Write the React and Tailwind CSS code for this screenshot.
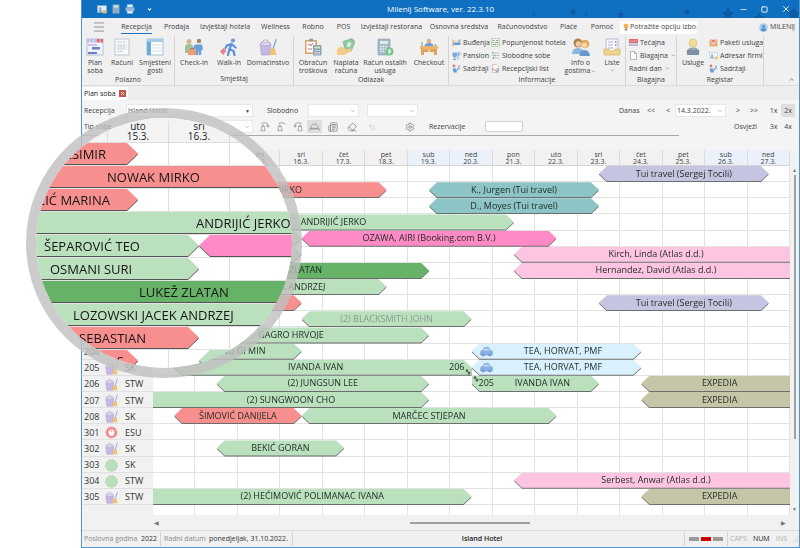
import React from 'react';
import clsx from 'clsx';
import { ChevronDown, ChevronUp, Eraser, Menu, Minus, Newspaper, Settings, Square, Undo2, X } from 'lucide-react';

const MENU = [
  { label: 'Recepcija', width: 'w-[43px]', active: true },
  { label: 'Prodaja', width: 'w-[37px]' },
  { label: 'Izvještaji hotela', width: 'w-[60px]' },
  { label: 'Wellness', width: 'w-[41px]' },
  { label: 'Robno', width: 'w-[34px]' },
  { label: 'POS', width: 'w-[27px]' },
  { label: 'Izvještaji restorana', width: 'w-[69px]' },
  { label: 'Osnovna sredstva', width: 'w-[66px]' },
  { label: 'Računovodstvo', width: 'w-[61px]' },
  { label: 'Plaće', width: 'w-[31px]' },
  { label: 'Pomoć', width: 'w-[36px]' },
];

const DAYS = [
  ['ned', '13.3.'], ['pon', '14.3.'], ['uto', '15.3.'], ['sri', '16.3.'], ['čet', '17.3.'],
  ['pet', '18.3.'], ['sub', '19.3.'], ['ned', '20.3.'], ['pon', '21.3.'], ['uto', '22.3.'],
  ['sri', '23.3.'], ['čet', '24.3.'], ['pet', '25.3.'], ['sub', '26.3.'], ['ned', '27.3.'],
];

const COLORS = {
  red: 'bg-[#f78f8f]',
  green: 'bg-[#bae0be]',
  dark: 'bg-[#66b266]',
  teal: 'bg-[#8dc5c7]',
  pink: 'bg-[#ff8ac6]',
  rose: 'bg-[#fdc5e2]',
  lilac: 'bg-[#c6c5e1]',
  sky: 'bg-[#d9f1ff]',
  olive: 'bg-[#c5c5a7]',
};

const SHAPES = {
  both: '[clip-path:polygon(0_50%,8px_0,calc(100%-8px)_0,100%_50%,calc(100%-8px)_100%,8px_100%)]',
  left: '[clip-path:polygon(0_50%,8px_0,100%_0,100%_100%,8px_100%)]',
  right: '[clip-path:polygon(0_0,calc(100%-8px)_0,100%_50%,calc(100%-8px)_100%,0_100%)]',
  lens: '[clip-path:polygon(0_0,calc(100%-11px)_0,100%_50%,calc(100%-11px)_100%,0_100%)]',
  lensLeft: '[clip-path:polygon(0_50%,11px_0,100%_0,100%_100%,11px_100%)]',
  // a stay that continues in another room has a squared corner on the side of the move
  movedIn: '[clip-path:polygon(0_0,calc(100%-8px)_0,100%_50%,calc(100%-8px)_100%,8px_100%,0_50%)]',
  movedOut: '[clip-path:polygon(0_50%,8px_0,calc(100%-8px)_0,100%_50%,100%_100%,8px_100%)]',
  none: '',
};

const BAR_PADDING = {
  both: 'px-2',
  left: 'pr-2 pl-4',
  right: 'px-2',
  movedIn: 'pr-2 pl-px',
  movedOut: 'pr-px pl-2',
};

// from / to are half-day steps, 0 is the morning of the first day
const ROOMS = [
  { bars: [{ from: 21, to: 29, color: 'lilac', shape: 'both', text: 'Tui travel (Sergej Tocili)' }] },
  {
    bars: [
      { from: 0, to: 11, color: 'red', shape: 'right', text: 'NOWAK MIRKO' },
      { from: 13, to: 21, color: 'teal', shape: 'both', text: 'K., Jurgen (Tui travel)' },
    ],
  },
  { bars: [{ from: 13, to: 21, color: 'teal', shape: 'both', text: 'D., Moyes (Tui travel)' }] },
  { bars: [{ from: 0, to: 17, color: 'green', shape: 'right', text: 'ANDRIJIĆ JERKO' }] },
  {
    bars: [
      { from: 0, to: 7, color: 'green', shape: 'right' },
      { from: 7, to: 19, color: 'pink', shape: 'both', text: 'OZAWA, AIRI (Booking.com B.V.)' },
    ],
  },
  {
    bars: [
      { from: 0, to: 7, color: 'green', shape: 'right' },
      { from: 17, to: 30, color: 'rose', shape: 'left', text: 'Kirch, Linda (Atlas d.d.)' },
    ],
  },
  {
    bars: [
      { from: 0, to: 13, color: 'dark', shape: 'right', text: 'LUKEŽ ZLATAN' },
      { from: 17, to: 30, color: 'rose', shape: 'left', text: 'Hernandez, David (Atlas d.d.)' },
    ],
  },
  { bars: [{ from: 0, to: 11, color: 'green', shape: 'right', text: 'LOZOWSKI JACEK ANDRZEJ' }] },
  {
    bars: [
      { from: 0, to: 7, color: 'red', shape: 'right' },
      { from: 21, to: 29, color: 'lilac', shape: 'both', text: 'Tui travel (Sergej Tocili)' },
    ],
  },
  { bars: [{ from: 7, to: 15, color: 'green', shape: 'both', text: '(2) BLACKSMITH JOHN', muted: true }] },
  { bars: [{ from: 0, to: 13, color: 'green', shape: 'right', text: 'GAGRO HRVOJE' }] },
  {
    number: '204',
    bars: [
      { from: 1, to: 7, color: 'green', shape: 'both', text: 'YANG GI MIN' },
      { from: 15, to: 23, color: 'sky', shape: 'both', text: 'TEA, HORVAT, PMF', car: true },
    ],
  },
  {
    number: '205', state: 'dirty', type: 'SK',
    bars: [
      { from: 1, to: 15, color: 'green', shape: 'movedOut', text: 'IVANDA IVAN', after: '206' },
      { from: 15, to: 23, color: 'sky', shape: 'both', text: 'TEA, HORVAT, PMF', car: true },
    ],
  },
  {
    number: '206', state: 'dirty', type: 'STW',
    bars: [
      { from: 3, to: 13, color: 'green', shape: 'both', text: '(2) JUNGSUN LEE' },
      { from: 15, to: 21, color: 'green', shape: 'movedIn', text: 'IVANDA IVAN', before: '205' },
      { from: 23, to: 30, color: 'olive', shape: 'left', text: 'EXPEDIA' },
    ],
  },
  {
    number: '207', state: 'dirty', type: 'STW',
    bars: [
      { from: 0, to: 13, color: 'green', shape: 'right', text: '(2) SUNGWOON CHO' },
      { from: 23, to: 30, color: 'olive', shape: 'left', text: 'EXPEDIA' },
    ],
  },
  {
    number: '208', state: 'dirty', type: 'SK',
    bars: [
      { from: 1, to: 7, color: 'red', shape: 'both', text: 'ŠIMOVIĆ DANIJELA' },
      { from: 7, to: 19, color: 'green', shape: 'both', text: 'MARČEC STJEPAN' },
    ],
  },
  { number: '301', state: 'blocked', type: 'ESU', bars: [] },
  {
    number: '302', state: 'dirty', type: 'SK',
    bars: [{ from: 3, to: 9, color: 'green', shape: 'both', text: 'BEKIĆ GORAN' }],
  },
  { number: '303', state: 'clean', type: 'SK', bars: [] },
  {
    number: '304', state: 'clean', type: 'STW',
    bars: [{ from: 17, to: 30, color: 'rose', shape: 'left', text: 'Serbest, Anwar (Atlas d.d.)' }],
  },
  {
    number: '305', state: 'dirty', type: 'STW',
    bars: [
      { from: 0, to: 15, color: 'green', shape: 'right', text: '(2) HEĆIMOVIĆ POLIMANAC IVANA' },
      { from: 23, to: 30, color: 'olive', shape: 'left', text: 'EXPEDIA' },
    ],
  },
];

const LENS_ROWS = [
  { text: 'KREŠIMIR', color: 'red', width: 'w-[102px]', pad: 'justify-end pr-8', shape: 'lens' },
  { text: 'NOWAK MIRKO', color: 'red', width: 'w-full', pad: 'pl-[71px]', shape: 'none' },
  { text: 'ČIĆ MARINA', color: 'red', width: 'w-[102px]', pad: 'justify-end pr-7', shape: 'lens' },
  { text: 'ANDRIJIĆ JERKO', color: 'green', width: 'w-full', pad: 'pl-40', shape: 'none' },
  { text: 'ŠEPAROVIĆ TEO', color: 'green', width: 'w-[163px]', pad: 'pl-2', shape: 'lens', next: 'pink' },
  { text: 'OSMANI SURI', color: 'green', width: 'w-[163px]', pad: 'pl-[14px]', shape: 'lens' },
  { text: 'LUKEŽ ZLATAN', color: 'dark', width: 'w-full', pad: 'pl-[103px]', shape: 'none' },
  { text: 'LOZOWSKI JACEK ANDRZEJ', color: 'green', width: 'w-full', pad: 'pl-[37px]', shape: 'none' },
  { text: 'K SEBASTIAN', color: 'red', width: 'w-[163px]', pad: 'justify-end pr-[53px]', shape: 'lens' },
  { text: 'KA S', color: 'red', width: 'w-[102px]', pad: 'justify-end pr-[14px]', shape: 'lens', gap: true, next: 'green' },
];

/* ---------- icons ---------- */

const Svg = ({ children, className = 'size-[18px]' }) => (
  <svg viewBox="0 0 18 18" className={clsx('shrink-0 opacity-90', className)} fill="none" aria-hidden="true">
    {children}
  </svg>
);

const PlanIcon = (p) => (
  <Svg {...p}>
    <rect x="1" y="1" width="16" height="16" fill="#f3f4fb" stroke="#9aa3c7" strokeWidth=".7" />
    <path d="M1 1h10v3.500H1z" fill="#aebbe0" />
    <path d="M11 1h6v3.500h-6z" fill="#e05a63" />
    <path d="M4 1v3.500M7.500 1v3.500M14 1v3.500" stroke="#fff" strokeWidth=".6" />
    <path d="M6 9h8v2.500H6zM2 14h9v2H2z" fill="#5a74b8" />
    <path d="M2 6h9v2H2z" fill="#c9bbe6" />
  </Svg>
);

const InvoiceIcon = (p) => (
  <Svg {...p}>
    <rect x="2" y="1" width="14" height="16" fill="#fafbfc" stroke="#aab3bb" strokeWidth=".8" />
    <path d="M4.500 4h9M4.500 7h9M4.500 9h9M4.500 11h9M4.500 13.500h5" stroke="#9fb0c0" strokeWidth=".9" strokeDasharray="2 .8" />
  </Svg>
);

const ListIcon = (p) => (
  <Svg {...p}>
    <rect x="1" y="1" width="16" height="16" fill="#fff" stroke="#8fabc2" strokeWidth=".8" />
    <path d="M1 1h16v3H1z" fill="#9cc9ea" />
    <path d="M1 4h4v13H1z" fill="#5ea5dc" />
    <path d="M6 7h10M6 10h10M6 13h10" stroke="#c8d6e0" strokeWidth=".8" />
  </Svg>
);

const CheckInIcon = (p) => (
  <Svg {...p}>
    <circle cx="4" cy="3.500" r="2.500" fill="#d3b083" />
    <path d="M0 15V9q0-3 4-3t4 3v6z" fill="#93bd93" />
    <circle cx="14" cy="3" r="2.200" fill="#9a7a66" />
    <path d="M10 6.500h7l1 5-1.500.5-.5 5h-2l-.5-5-.5 5h-2l-.5-6-2 1-1-1z" fill="#5d95da" />
    <path d="M3 12h8v5H3z" fill="#ee9166" />
    <path d="M5.500 12v-1.500h3V12" stroke="#c7683f" />
  </Svg>
);

const WalkIcon = (p) => (
  <Svg {...p}>
    <circle cx="13" cy="2.500" r="2.100" fill="#5d8fd6" />
    <path d="m11.500 6-2 5M9.500 11l4 2 1 4M9.500 11l-1.500 6M11.500 6l4 3.500M11.500 6 7 7.500 5.500 10" stroke="#4f86d2" strokeWidth="2.200" strokeLinecap="round" />
    <path d="m0 13.500 3.500-3.500 3 3L3 17z" fill="#e77683" />
  </Svg>
);

const BucketIcon = (p) => (
  <Svg {...p}>
    <path d="M1 6h11l-1.500 11h-8z" fill="#c1b0e3" stroke="#a08fcb" strokeWidth=".6" />
    <ellipse cx="6.500" cy="6" rx="5.500" ry="1.800" fill="#ddd2f2" stroke="#a08fcb" strokeWidth=".6" />
    <path d="M1.500 5.500Q6.500-2 11.500 5.500" stroke="#9b93ae" strokeWidth=".8" />
    <path d="m17.300 1-3 9" stroke="#6fa0d6" strokeWidth="1.200" />
    <path d="m12.500 9.500 3.500 1 1.500 6.500h-7.500z" fill="#eabf6b" />
  </Svg>
);

const ClipboardIcon = (p) => (
  <Svg {...p}>
    <path d="M1 2h12v14H1z" fill="#d89a54" />
    <path d="M2.500 3.500h9v11h-9z" fill="#fbfbfb" />
    <path d="M5 .8h4v2.500H5z" fill="#7f8fa0" />
    <path d="m4 7 2-1 1 2 2-3M4 11h4" stroke="#d45d5d" strokeWidth=".9" />
    <rect x="9" y="7" width="8.500" height="10.500" rx="1" fill="#8097ab" />
    <path d="M10.500 8.500h5.500v2h-5.500z" fill="#c9e7c5" />
    <path d="M10.500 12.500h5.500M10.500 14.500h5.500M10.500 16h5.500" stroke="#e7edf2" strokeDasharray="1.300 .8" />
  </Svg>
);

const CashIcon = (p) => (
  <Svg {...p}>
    <path d="m6 3.500 9-3 3 3-4 10-6-2z" fill="#86c29a" stroke="#5ea276" strokeWidth=".6" />
    <ellipse cx="12" cy="6.500" rx="2" ry="2.800" fill="#d3ecd8" transform="rotate(25 12 6.500)" />
    <path d="M0 11.500q4-5 7-1.500l2 1.500 5-1q2 1-1 3.500l-6 3H0z" fill="#f4c97e" />
  </Svg>
);

const CalcIcon = (p) => (
  <Svg {...p}>
    <rect x="2" y="1" width="12" height="16" rx="1" fill="#9db3c6" stroke="#7690a6" strokeWidth=".6" />
    <path d="M4 3h8v3H4z" fill="#d9efdc" />
    <path d="M4 8.500h8M4 11h8M4 13.500h6" stroke="#eef3f7" strokeWidth="1.300" strokeDasharray="1.600 1" />
    <circle cx="13.500" cy="13.500" r="4" fill="#6cc07f" />
    <path d="M14.800 12q-2.600-1-2.600.5t2.400 1-2.600 1.500M13.500 11v5" stroke="#fff" strokeWidth=".7" />
  </Svg>
);

const PadIcon = (p) => (
  <Svg {...p}>
    <rect x="3" y="1" width="12" height="16" rx="1" fill="#aebfcb" />
    <path d="M5 3h8v3H5z" fill="#eaf5ea" />
    <path d="M5 9h8M5 12h8M5 15h8" stroke="#6f8798" strokeWidth="1.300" strokeDasharray="1.600 1" />
  </Svg>
);

const DeskIcon = (p) => (
  <Svg {...p}>
    <circle cx="9" cy="3" r="2.300" fill="#dba873" />
    <path d="M4.500 8q0-3 4.500-3t4.500 3z" fill="#5d95da" />
    <path d="M2 4v4M15.500 6v2" stroke="#8ab47f" strokeWidth="1.500" />
    <path d="M0 8h18v3H0z" fill="#eab062" />
    <path d="M1 11h16v6h-3v-3H4v3H1z" fill="#dc9c4e" />
    <circle cx="9" cy="12.500" r="1" fill="#fbe3b8" />
  </Svg>
);

const GuestsIcon = (p) => (
  <Svg {...p}>
    <circle cx="6" cy="5" r="4.500" fill="#a8743f" />
    <circle cx="6.500" cy="6" r="2.800" fill="#f1c89b" />
    <path d="M0 16q0-6 6-6t6 6z" fill="#7fb2e0" />
    <circle cx="13" cy="6" r="4.300" fill="#dba24a" />
    <circle cx="12.500" cy="7" r="2.600" fill="#f6d7b1" />
    <path d="M7.500 18q0-6 5-6t5.500 6z" fill="#5a8fcb" />
  </Svg>
);

const TrayIcon = (p) => (
  <Svg {...p}>
    <path d="M3 1h12v14H3z" fill="#fafafe" stroke="#9a94bd" strokeWidth=".7" />
    <path d="M5 4h5M5 7h5M5 10h5" stroke="#a49cc8" strokeWidth=".9" />
    <path d="M12 4h1.500M12 7h1.500" stroke="#8a6fc0" strokeWidth="1.500" />
    <path d="M1 11h5l1 2h4l1-2h5v6H1z" fill="#f0d27a" stroke="#c9a648" strokeWidth=".6" />
  </Svg>
);

const PersonIcon = (p) => (
  <Svg {...p}>
    <circle cx="9" cy="5" r="4" fill="#f2dc8d" stroke="#d2b45e" strokeWidth=".6" />
    <path d="M2.500 15q0-5.500 6.500-5.500t6.500 5.500z" fill="#8f9fb3" />
    <path d="M3 12h12v5H3z" fill="#74869c" />
  </Svg>
);

const BedIcon = (p) => (
  <Svg {...p}>
    <path d="M1 3h2v14H1z" fill="#c7985e" />
    <path d="M3 9h14v5H3z" fill="#5b93d4" />
    <path d="M4 5h6v4H4z" fill="#f3cf95" />
    <path d="M12 3h5v6h-5z" fill="#8ab4e6" />
  </Svg>
);

const GlassIcon = (p) => (
  <Svg {...p}>
    <path d="M1 3h9v7q-2 3-4.500 3T1 10z" fill="#6aa4e0" />
    <path d="M5 12v5M2.500 17h6" stroke="#4f7fb5" strokeWidth="1.500" />
    <path d="M12 2v15M16 2v6q-2 2-3 0V2" stroke="#7aa5d4" strokeWidth="1.800" />
  </Svg>
);

const TagsIcon = (p) => (
  <Svg {...p}>
    <circle cx="4" cy="4" r="2.800" fill="#e0715e" />
    <path d="M1 9h7l2 8H3z" fill="#5b93d4" />
    <path d="m10 13 5-10" stroke="#6f9cc9" strokeWidth="2.500" />
    <circle cx="14" cy="9" r="2.500" fill="#a6c3e2" />
  </Svg>
);

const GridIcon = (p) => (
  <Svg {...p}>
    <rect x="1" y="1" width="16" height="16" fill="#eef6ee" stroke="#86b68b" />
    <path d="M3 5h5M10 5h5M3 9h3M8 9h7M3 13h7M12 13h3" stroke="#7fae86" strokeWidth="2" />
  </Svg>
);

const LinesIcon = (p) => (
  <Svg {...p}>
    <path d="M1 4h16M1 9h16M1 14h16" stroke="#9dbfa2" strokeWidth="1.500" />
    <path d="M4 2v4M8 7v4M5 12v4" stroke="#73a37b" strokeWidth="2" />
  </Svg>
);

const PageIcon = (p) => (
  <Svg {...p}>
    <path d="M3 1h8l4 4v12H3z" fill="#fff" stroke="#8b8b8b" strokeWidth="1.300" />
    <path d="M11 1v4h4" stroke="#8b8b8b" strokeWidth="1.300" />
  </Svg>
);

const ChartPageIcon = (p) => (
  <Svg {...p}>
    <path d="M3 1h8l4 4v12H3z" fill="#fff" stroke="#c08b8b" />
    <path d="m1 12 4-3 3 5 5-6" stroke="#db5454" strokeWidth="1.500" />
    <path d="m10 16 6-5" stroke="#5b8fcb" strokeWidth="2.500" />
  </Svg>
);

const RatesIcon = (p) => (
  <Svg {...p}>
    <path d="M0 2h18v8H0z" fill="#dc5a62" />
    <path d="M0 11h18v5H0z" fill="#9db0d0" />
    <path d="M2 6h14M2 13.500h14" stroke="#f6dede" strokeWidth="1.300" strokeDasharray="3 1" />
  </Svg>
);

const HandsIcon = (p) => (
  <Svg {...p}>
    <path d="M1 17V6q2-5 5-4L5 8l4 5v4zM17 17V6q-2-5-5-4l1 6-4 5v4z" fill="#e9a66c" />
    <circle cx="9" cy="6" r="3" fill="#d9645b" />
  </Svg>
);

const CardIcon = (p) => (
  <Svg {...p}>
    <rect x="1" y="3" width="16" height="12" fill="#f8fbff" stroke="#9db8d4" />
    <circle cx="6" cy="8" r="2" fill="#6fa1d8" />
    <path d="M3 14q0-4 3-4t3 4z" fill="#6fa1d8" />
    <path d="M11 11h6v6h-6z" fill="#f0c65e" />
  </Svg>
);

const CarIcon = (p) => (
  <Svg {...p}>
    <path d="M1 9q1-1.500 3-1.500L6 3.500h6l2 4q3 0 3.300 2V14H.700z" fill="#7fa9e2" stroke="#5f88c4" strokeWidth=".7" />
    <path d="m5.500 7.500 1-2.800H9v2.800zM10 4.700h1.500l1.300 2.800H10z" fill="#d2e5fb" />
    <circle cx="4.500" cy="14" r="2" fill="#6b8dc0" />
    <circle cx="13.500" cy="14" r="2" fill="#6b8dc0" />
  </Svg>
);

const MoveIcon = (p) => (
  <Svg {...p}>
    <circle cx="6" cy="5" r="4" fill="#3f4a41" />
    <circle cx="12" cy="12" r="4.500" fill="#3f4a41" />
    <path d="m5 4 2 2M11 11l2.500 2.500" stroke="#ddd" strokeWidth="1.500" />
  </Svg>
);

const BlockedIcon = (p) => (
  <Svg {...p}>
    <circle cx="9" cy="9" r="7.800" fill="#ef6a6a" stroke="#f5b3b3" strokeWidth="1.500" />
    <path d="M5.500 9V6M7.800 8V4.500M10.100 8V4.500M12.300 9V6" stroke="#fff" strokeWidth="1.500" strokeLinecap="round" />
    <path d="M5 8h8v3q-1 3-4 3t-4-3z" fill="#fff" />
  </Svg>
);

const CleanIcon = (p) => (
  <Svg {...p}>
    <circle cx="9" cy="9" r="8" fill="#b5dfb9" stroke="#9cc9a0" />
  </Svg>
);

const PinIcon = ({ arrow = 'M12 8h5M14.500 5.500v5', flip }) => (
  <Svg className={clsx('size-[11px]', flip && '-scale-x-100')}>
    <path d="M3 16 4.500 9h4l1.500 7zM4.500 9q0-2.500 2-2.500t2 2.500" stroke="#858585" strokeWidth="1.200" />
    <path d="M4 4q5-3.500 11 1" stroke="#858585" strokeWidth="1.300" />
    <path d={arrow} stroke="#858585" strokeWidth="1.500" />
  </Svg>
);

const BellIcon = () => (
  <Svg className="size-[11px]">
    <path d="M3 12q0-7 6-7t6 7zM1 15.500V13h16v2.500" stroke="#858585" strokeWidth="1.200" />
  </Svg>
);

const STATE_ICONS = { dirty: BucketIcon, blocked: BlockedIcon, clean: CleanIcon };

/* ---------- title bar and ribbon ---------- */

const STARS = [
  [535, 14, 2], [574, 12, 4], [587, 14, 2], [622, 15, 4], [688, 12, 4], [729, 14, 7], [760, 18, 6], [795, 14, 8],
];

const TitleBar = () => (
  <header className="relative flex h-[18px] shrink-0 items-center justify-between overflow-hidden bg-[#0f70c1] pr-1 pl-[15px] text-white">
    <svg className="absolute inset-y-0 right-0 w-[300px]" viewBox="500 0 300 18" fill="#0c5ca3" aria-hidden="true">
      {STARS.map(([x, y, r]) => (
        <path
          key={x}
          transform={`translate(${x} ${y}) scale(${r})`}
          d="M0-1 .28-.35.97-.3.45.14.6.82 0 .46-.6.82-.45.14-.97-.3-.28-.35z"
        />
      ))}
    </svg>
    <div className="relative flex items-center gap-1">
      <CardIcon className="size-[10px]" />
      <PadIcon className="size-[10px]" />
      <Svg className="size-[10px]">
        <path d="M4 1h10v5H4zM4 11h10v6H4z" fill="#fff" />
        <path d="M1 6h16v7H1z" fill="#a9bfdf" />
      </Svg>
      <ChevronDown className="ml-2 size-[5px]" strokeWidth={5} />
    </div>
    <h1 className="absolute inset-x-0 text-center text-[8px] leading-[18px] font-normal">Milenij Software, ver. 22.3.10</h1>
    <div className="relative flex items-center gap-[13px] pr-1">
      <button aria-label="Minimize"><Minus className="size-[9px]" /></button>
      <button aria-label="Maximize"><Square className="size-[7px]" strokeWidth={3} /></button>
      <button aria-label="Close"><X className="size-[10px]" /></button>
    </div>
  </header>
);

const MenuBar = () => (
  <nav className="flex h-[18px] shrink-0 items-center">
    <button aria-label="Menu" className="flex w-[33px] shrink-0 justify-center text-[#555]">
      <Menu className="size-[14px]" strokeWidth={1} />
    </button>
    {MENU.map(({ label, width, active }) => (
      <button key={label} className={clsx('flex h-full shrink-0 justify-center whitespace-nowrap', width)}>
        <span className={clsx('h-4 leading-[18px]', active && 'border-b border-[#1a6fc0]')}>{label}</span>
      </button>
    ))}
    <label className="flex h-[13px] w-[77px] shrink-0 items-center bg-white pl-[2px]">
      <Svg className="size-[8px]">
        <path d="M9 1a6 6 0 0 0-3 11h6A6 6 0 0 0 9 1z" fill="#f4a83a" />
        <path d="M6 12h6v5H6z" fill="#8a8a8a" />
      </Svg>
      <input
        aria-label="Potražite opciju izbornika"
        placeholder="Potražite opciju izbo."
        className="w-0 flex-1 text-[7px] outline-none placeholder:text-[#444]"
      />
    </label>
    <div className="flex flex-1 items-center justify-end gap-[2px] pr-1">
      <Svg className="size-[9px]">
        <circle cx="9" cy="9" r="8.500" fill="#9cc6ef" />
        <circle cx="9" cy="7" r="3" fill="#4b88c9" />
        <path d="M3 15q1-5 6-5t6 5q-6 4-12 0z" fill="#4b88c9" />
      </Svg>
      <span>MILENIJ</span>
    </div>
  </nav>
);

const Group = ({ title, width, children }) => (
  <section className={clsx('flex shrink-0 flex-col border-r border-[#d4d4d4]', width)}>
    <div className="flex flex-1">{children}</div>
    <h2 className="pb-px text-center leading-[10px] font-normal">{title}</h2>
  </section>
);

const BigButton = ({ icon: Icon, lines, width, drop }) => (
  <button className={clsx('flex shrink-0 flex-col items-center pt-[2px] text-center leading-[8px] whitespace-nowrap', width)}>
    <Icon />
    <span className="mt-[3px]">
      {lines.map((line, i) => (
        <span key={line} className="block">
          {line}
          {drop && lines.length > 1 && i === lines.length - 1 && <ChevronDown className="ml-px inline size-[5px]" />}
        </span>
      ))}
    </span>
    {drop && lines.length === 1 && <ChevronDown className="mt-px size-[5px]" />}
  </button>
);

const SmallButton = ({ icon: Icon, children, drop }) => (
  <button className="flex h-[13px] items-center gap-[2px] whitespace-nowrap">
    {Icon && <Icon className="size-[9px]" />}
    {children}
    {drop && <ChevronDown className="ml-px size-[5px]" />}
  </button>
);

const Ribbon = () => (
  <div className="flex h-[50px] shrink-0 border-b border-[#dcdcdc]">
    <Group title="Polazno" width="w-[93px]">
      <BigButton icon={PlanIcon} lines={['Plan', 'soba']} width="w-[26px]" />
      <BigButton icon={InvoiceIcon} lines={['Računi']} width="w-[28px]" />
      <BigButton icon={ListIcon} lines={['Smješteni', 'gosti']} width="w-[38px]" />
    </Group>
    <Group title="Smještaj" width="w-[119px]">
      <BigButton icon={CheckInIcon} lines={['Check-in']} width="w-[38px]" />
      <BigButton icon={WalkIcon} lines={['Walk-in']} width="w-[32px]" />
      <BigButton icon={BucketIcon} lines={['Domaćinstvo']} width="w-[46px]" />
    </Group>
    <Group title="Odlazak" width="w-[155px]">
      <BigButton icon={ClipboardIcon} lines={['Obračun', 'troškova']} width="w-[38px]" />
      <BigButton icon={CashIcon} lines={['Naplata', 'računa']} width="w-[28px]" />
      <BigButton icon={CalcIcon} lines={['Račun ostalih', 'usluga']} width="w-[50px]" />
      <BigButton icon={DeskIcon} lines={['Checkout']} width="w-[38px]" />
    </Group>
    <Group title="Informacije" width="w-[177px]">
      <div className="w-[42px] pl-[3px]">
        <SmallButton icon={BedIcon}>Buđenja</SmallButton>
        <SmallButton icon={GlassIcon}>Pansion</SmallButton>
        <SmallButton icon={TagsIcon}>Sadržaji</SmallButton>
      </div>
      <div className="w-[71px]">
        <SmallButton icon={GridIcon}>Popunjenost hotela</SmallButton>
        <SmallButton icon={LinesIcon}>Slobodne sobe</SmallButton>
        <SmallButton icon={ChartPageIcon}>Recepcijski list</SmallButton>
      </div>
      <BigButton icon={GuestsIcon} lines={['Info o', 'gostima']} width="w-[37px]" drop />
      <BigButton icon={TrayIcon} lines={['Liste']} width="w-[26px]" drop />
    </Group>
    <Group title="Blagajna" width="w-[51px]">
      <div className="flex-1 pl-[3px]">
        <SmallButton icon={RatesIcon}>Tečajna</SmallButton>
        <SmallButton icon={PageIcon} drop>Blagajna</SmallButton>
        <SmallButton drop>Radni dan</SmallButton>
      </div>
    </Group>
    <Group title="Registar" width="w-[87px]">
      <BigButton icon={PersonIcon} lines={['Usluge']} width="w-[32px]" />
      <div className="flex-1">
        <SmallButton icon={HandsIcon}>Paketi usluga</SmallButton>
        <SmallButton icon={CardIcon}>Adresar firmi</SmallButton>
        <SmallButton icon={TagsIcon}>Sadržaji</SmallButton>
      </div>
    </Group>
    <button aria-label="Collapse" className="mt-auto mr-1 mb-[2px] ml-auto"><ChevronUp className="size-[7px]" /></button>
  </div>
);

/* ---------- filter bar ---------- */

const Picker = ({ label, value, width, solid }) => (
  <div className={clsx('relative shrink-0 border border-[#e8e8e8] bg-white', width)}>
    <select aria-label={label} className="block h-[11px] w-full appearance-none pl-[1px] outline-none">
      <option>{value}</option>
    </select>
    {solid ? (
      <span className="pointer-events-none absolute top-[3px] right-[2px] text-[5px] leading-[6px]">▼</span>
    ) : (
      <ChevronDown className="pointer-events-none absolute top-[3px] right-[2px] size-[6px] text-[#888]" />
    )}
  </div>
);

const Filters = () => (
  <div className="relative flex h-[50px] shrink-0 items-start justify-between bg-[#f4f4f4] pt-1 pr-[4px] pl-[2px]">
    <div className="flex flex-col gap-[3px]">
      <div className="flex h-[13px] items-center">
        <span className="w-[42px]">Recepcija</span>
        <Picker label="Recepcija" value="Island Hotel" width="w-[127px]" solid />
        <span className="ml-[14px] w-[41px] font-medium">Slobodno</span>
        <Picker label="Slobodno od" value="" width="w-[51px]" />
        <div className="w-2" />
        <Picker label="Slobodno do" value="" width="w-[51px]" />
      </div>
      <div className="flex h-[13px] items-center">
        <span className="w-[42px]">Tip sobe</span>
        <Picker label="Tip sobe" value="" width="w-[127px]" />
        <div className="ml-[3px] flex items-center text-[#858585]">
          <button aria-label="Prethodni" className="flex w-[17px] justify-center"><PinIcon /></button>
          <button aria-label="Trenutni" className="flex w-[17px] justify-center"><PinIcon arrow="" /></button>
          <button aria-label="Sljedeći" className="flex w-[17px] justify-center"><PinIcon flip /></button>
          <button aria-label="Recepcija" className="flex w-[15px] justify-center bg-[#dedede] py-px"><BellIcon /></button>
          <button aria-label="Popis" className="flex w-[22px] justify-center"><Newspaper className="size-[10px]" /></button>
          <button aria-label="Briši" className="flex w-[15px] justify-center"><Eraser className="size-[10px]" /></button>
          <button aria-label="Poništi" className="flex w-[26px] justify-center text-[#ccc]"><Undo2 className="size-[8px]" /></button>
          <button aria-label="Postavke" className="ml-[18px] flex w-[13px] justify-center"><Settings className="size-[10px]" /></button>
        </div>
        <label className="ml-[13px] flex items-center font-medium">
          <span className="w-[56px]">Rezervacije</span>
          <input className="h-[11px] w-[38px] rounded-[2px] border border-[#cfcfcf] bg-white" />
        </label>
      </div>
    </div>
    <div className="flex flex-col items-end gap-[3px]">
      <div className="flex h-[13px] items-center">
        <button className="w-7 text-left font-medium">Danas</button>
        <button className="w-[19px] text-left">&lt;&lt;</button>
        <button className="w-[9px] text-left">&lt;</button>
        <Picker label="Datum" value="14.3.2022." width="w-[51px]" />
        <button className="w-6 text-center">&gt;</button>
        <button className="w-3 text-left">&gt;&gt;</button>
        <button className="ml-[4px] w-[15px] text-center">1x</button>
        <button className="h-[13px] w-[14px] bg-[#dedede] text-center">2x</button>
      </div>
      <div className="flex h-[13px] items-center">
        <button className="mr-[9px] font-medium">Osvježi</button>
        <button className="w-[15px] text-center">3x</button>
        <button className="w-[14px] text-center">4x</button>
      </div>
    </div>
    <div className="absolute top-[35px] right-[120px] left-0 h-px bg-[#a9a9a9]" />
  </div>
);

/* ---------- schedule ---------- */

const Bar = ({ bar }) => (
  <div
    className="min-w-0 drop-shadow-[0_1px_0_#6d6d6d]"
    style={{ gridColumn: `${bar.from + 1} / ${bar.to + 1}`, gridRow: 1 }}
  >
    <div
      className={clsx(
        'flex h-full items-center justify-center overflow-hidden text-[9px] leading-[14px] whitespace-nowrap',
        bar.muted ? 'text-[#8d9d8f]' : 'text-[#1f2a22]',
        BAR_PADDING[bar.shape],
        COLORS[bar.color],
        SHAPES[bar.shape],
      )}
    >
      {bar.car && <CarIcon className="size-[13px]" />}
      {bar.before && <MoveIcon className="size-[6px] self-start" />}
      {bar.before && <span>{bar.before}</span>}
      <span className="flex-1 text-center">{bar.text}</span>
      {bar.after && <span>{bar.after}</span>}
      {bar.after && <MoveIcon className="size-[6px] self-end" />}
    </div>
  </div>
);

const DayLines = () => (
  <div className="absolute inset-0 grid grid-cols-15">
    {DAYS.map(([, date]) => (
      <div key={date} className="border-r border-[#e2e2e2]" />
    ))}
  </div>
);

const Schedule = () => (
  <main className="flex min-h-0 flex-1 bg-[#f1f1f1]">
    <div className="flex min-w-0 flex-1 flex-col">
      <div className="flex h-4 shrink-0 border-b border-[#d6d6d6]">
        <div className="w-[71px] shrink-0" />
        <div className="grid flex-1 grid-cols-15 text-center text-[7px] leading-[7px]">
          {DAYS.map(([day, date]) => (
            <div
              key={date}
              className={clsx('border-r border-[#dcdcdc] pt-px', (day === 'sub' || day === 'ned') && 'bg-[#eaf1fb]')}
            >
              <div>{day}</div>
              <div>{date}</div>
            </div>
          ))}
        </div>
      </div>
      <div className="flex min-h-0 flex-1">
        <div className="flex w-[71px] shrink-0 flex-col pb-[10px] text-[9px] text-[#333]">
          {ROOMS.map(({ number, state, type }, i) => {
            const StateIcon = STATE_ICONS[state];
            return (
              <div key={i} className="flex min-h-0 flex-1 items-center border-b border-[#e0e0e0] pt-[2px] pl-[2px]">
                <span className="w-[21px]">{number}</span>
                <span className="w-5">{StateIcon && <StateIcon className="size-[13px]" />}</span>
                <span>{type}</span>
              </div>
            );
          })}
        </div>
        <div className="relative flex min-w-0 flex-1 flex-col bg-white pb-[10px]">
          <DayLines />
          {ROOMS.map(({ bars }, i) => (
            <div key={i} className="relative grid min-h-0 flex-1 grid-cols-30 grid-rows-1 border-b border-[#e2e2e2]">
              {bars.map((bar) => (
                <Bar key={bar.from} bar={bar} />
              ))}
            </div>
          ))}
        </div>
      </div>
      <div className="flex h-[15px] shrink-0 items-center text-[6px] leading-none text-[#777]">
        <span className="ml-[72px]">◀</span>
        <span className="mx-auto h-[2px] w-[120px] bg-[#a0a0a0]" />
        <span className="mr-1">▶</span>
      </div>
    </div>
    <div className="flex w-[9px] shrink-0 flex-col items-center pt-4 pb-4 text-[5px] text-[#777]">
      <span className="leading-[9px]">▲</span>
      <span className="w-[2px] flex-1 bg-[#a0a0a0]" />
      <span className="mt-[66px] leading-[9px]">▼</span>
    </div>
  </main>
);

const StatusBar = () => (
  <footer className="flex h-[17px] shrink-0 items-center border-t border-[#dcdcdc] bg-[#f0f0f0] pl-[2px] whitespace-nowrap text-[#888]">
    <span className="w-[57px]">Poslovna godina</span>
    <span className="w-[19px] font-medium text-[#333]">2022</span>
    <span className="w-[49px] border-l border-[#d4d4d4] pl-[3px] leading-[14px]">Radni datum</span>
    <span className="w-[84px] border-r border-[#d4d4d4] leading-[14px] font-medium text-[#333]">
      ponedjeljak, 31.10.2022.
    </span>
    <span className="mr-auto w-[378px] text-center font-semibold text-[#222]">Island Hotel</span>
    <span className="flex gap-[2px] border-x border-[#d4d4d4] px-1 py-[5px]">
      <i className="h-1 w-[10px] bg-[#999]" />
      <i className="h-1 w-[10px] bg-[#d40000]" />
      <i className="h-1 w-[10px] bg-[#999]" />
    </span>
    <span className="ml-[2px] w-[23px] text-[#b0b0b0]">CAPS</span>
    <span className="w-[23px] text-[#222]">NUM</span>
    <span className="w-[15px] text-[#b0b0b0]">INS</span>
    <Svg className="size-[8px]">
      <path d="M14 4h2M14 9h2M14 14h2M9 9h2M9 14h2M4 14h2" stroke="#aaa" strokeWidth="2" />
    </Svg>
  </footer>
);

/* ---------- magnifier ---------- */

const Lens = () => (
  <div className="absolute top-[108px] left-[26px] h-[270px] w-[276px] overflow-hidden rounded-[50%] border-[10px] border-[#bfbfbf]/80 bg-white bg-clip-padding">
    <div className="absolute inset-0 grid grid-cols-[72px_61px_61px_61px]">
      <div className="border-r border-[#dedede]" />
      <div className="border-r border-[#dedede]" />
      <div className="border-r border-[#dedede]" />
    </div>
    <div className="relative grid h-[25px] grid-cols-[72px_61px_61px_61px] border-b border-[#dcdcdc] bg-[#f3f3f3] pt-[3px] text-center text-[10px] leading-[10px] text-[#222]">
      <div className="border-r border-[#dedede]" />
      <div className="border-r border-[#dedede]">uto<br />15.3.</div>
      <div className="border-r border-[#dedede]">sri<br />16.3.</div>
    </div>
    {LENS_ROWS.map(({ text, color, width, pad, shape, gap, next }) => (
      <div key={text} className="relative flex h-[23px] border-b border-[#e2e2e2]">
        <div className={clsx('shrink-0 drop-shadow-[0_1px_0_#555]', width)}>
          <div
            className={clsx(
              'flex h-[21px] items-center text-[13px] leading-[20px] whitespace-nowrap text-[#151515]',
              COLORS[color],
              SHAPES[shape],
              pad,
            )}
          >
            {text}
          </div>
        </div>
        {gap && <div className="w-[61px]" />}
        {next && (
          <div className="flex-1 drop-shadow-[0_1px_0_#555]">
            <div className={clsx('h-[21px]', COLORS[next], SHAPES.lensLeft)} />
          </div>
        )}
      </div>
    ))}
  </div>
);

export default function App() {
  return (
    <div className="relative h-screen min-h-[540px] min-w-[800px] bg-white pl-[81px] font-['Open_Sans','Noto_Sans',sans-serif] text-[7px] leading-[10px] text-[#3f3f3f]">
      <div className="flex h-full flex-col border-x border-b border-[#4f97d3] bg-[#f0f0f0]">
        <TitleBar />
        <MenuBar />
        <Ribbon />
        <div className="flex h-[14px] shrink-0 items-end bg-[#ededed]">
          <div className="flex h-[13px] w-[46px] items-center bg-white pl-[2px] text-[#222]">
            <span className="flex-1">Plan soba</span>
            <button aria-label="Zatvori" className="mr-[2px] bg-[#c8504f] p-px text-white"><X className="size-[5px]" strokeWidth={4} /></button>
          </div>
        </div>
        <Filters />
        <Schedule />
        <StatusBar />
      </div>
      <Lens />
    </div>
  );
}
